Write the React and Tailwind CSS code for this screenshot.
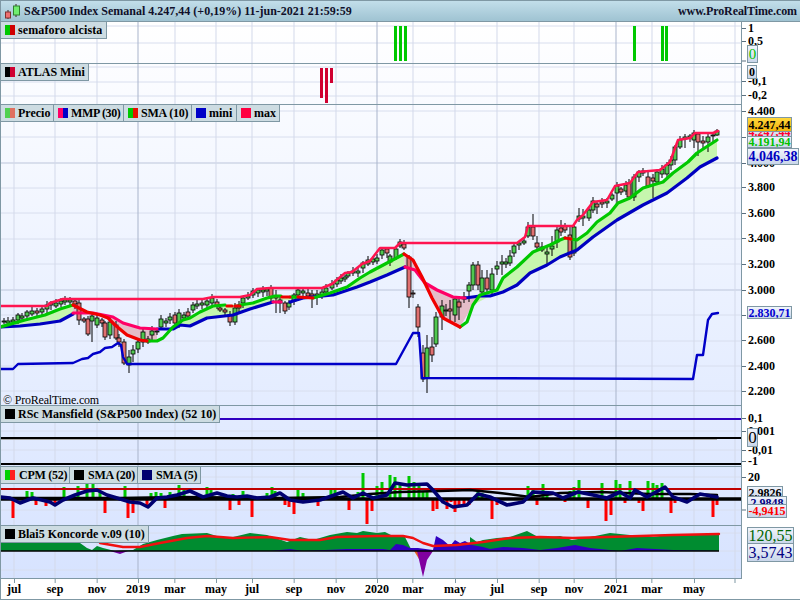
const greenTrend = [
  [[0,327],[25,320],[45,315],[60,309],[73,305]],
  [[147,341],[157,341],[163,338],[173,327],[183,320],[190,318],[200,312],[213,306],[225,305]],
  [[240,305],[253,303],[267,298],[275,296],[281,296]],
  [[290,297],[297,297]],
  [[313,298],[330,293],[347,287],[360,278],[370,272],[387,263],[404,254]],
  [[460,327],[467,322],[473,305],[480,295],[497,290],[503,278],[517,267],[533,252],[550,245],[560,240],[565,238]],
  [[571,239],[577,240],[587,233],[597,222],[610,213],[618,203],[630,198],[643,188],[663,182],[673,173],[688,162],[697,153],[717,140]],
];
const redTrend = [
  [[73,305],[87,312],[100,315],[108,318],[115,325],[127,335],[140,340],[147,341]],
  [[227,306],[232,306]],
  [[235,306],[240,306]],
  [[282,297],[290,297]],
  [[298,297],[313,298]],
  [[404,254],[413,260],[422,277],[432,298],[443,318],[460,327]],
  [[565,238],[571,239]],
];
const blueTrend = [
  [[0,327],[20,326],[40,324],[60,321],[73,314]],
  [[157,329],[173,329],[180,325],[190,326],[207,318],[233,315],[250,309],[273,302]],
  [[290,302],[303,298],[313,297],[333,295],[357,287],[370,282],[387,275],[405,267]],
  [[465,298],[480,296],[490,296],[503,292],[517,285],[530,273],[547,265],[560,257],[577,250],[593,237],[617,220],[643,205],[667,193],[687,178],[700,167],[717,158]],
];
const pinkTrend = [
  [[73,313],[93,313],[113,317],[123,323],[140,328],[157,329]],
  [[273,302],[281,302]],
  [[405,267],[415,270],[425,283],[437,290],[453,297],[465,298]],
];
const greenBands = [
  [[0,327],[25,320],[45,315],[60,309],[73,305],[73,314],[60,321],[40,324],[20,326]],
  [[157,341],[163,338],[173,327],[183,320],[190,318],[200,312],[213,306],[225,305],[253,303],[267,298],[275,296],[300,297],[313,298],[330,293],[347,287],[360,278],[370,272],[387,263],[404,254],[405,267],[387,275],[370,282],[357,287],[333,295],[313,297],[303,298],[273,302],[250,309],[233,315],[207,318],[190,326],[180,325],[173,329]],
  [[473,305],[480,295],[497,290],[503,278],[517,267],[533,252],[550,245],[565,238],[577,240],[587,233],[597,222],[610,213],[618,203],[630,198],[643,188],[663,182],[673,173],[688,162],[697,153],[717,140],[717,158],[700,167],[687,178],[667,193],[643,205],[617,220],[593,237],[577,250],[560,257],[547,265],[530,273],[517,285],[503,292],[490,296]],
];
const pinkBands = [
  [[73,305],[87,312],[100,315],[108,318],[115,325],[127,335],[140,340],[157,341],[157,329],[140,328],[123,323],[113,317],[93,313],[73,313]],
  [[404,254],[413,260],[422,277],[432,298],[443,318],[460,327],[473,305],[480,296],[465,298],[453,297],[437,290],[425,283],[415,270],[405,267]],
];
const maxLine = [[0,306],[47,306],[50,303],[63,299],[203,299],[213,297],[240,297],[250,295],[257,289],[270,288],[322,288],[332,284],[345,273],[352,272],[362,264],[370,261],[380,248],[395,248],[400,243],[517,243],[525,237],[528,226],[573,226],[577,220],[583,215],[593,202],[607,200],[615,186],[630,183],[638,172],[660,170],[670,162],[678,140],[690,138],[695,133],[713,133],[718,131]];
const miniLow = [[0,369],[13,369],[18,364],[73,363],[82,359],[88,358],[93,354],[100,352],[105,348],[112,347],[118,343],[121,345],[123,357],[127,364],[396,364],[413,333],[419,333],[422,378],[693,379],[697,355],[703,355],[708,320],[712,314],[718,313]];

// x, body top, body bottom, colour, optional wick high / low
const candles = [
  [4,321,322,"g"],[8,321,323,"g"],[13,320,322,"g"],[18,315,320,"g"],[22,316,318,"g"],[27,312,316,"g"],[32,311,314,"g"],[37,311,313,"r"],[42,309,312,"g"],[47,305,309,"g"],[51,303,305,"r"],[56,303,306,"g"],[61,301,304,"g"],[65,300,302,"g"],[70,300,302,"g"],[75,301,304,"r"],
  [79,303,320,"r"],[84,319,321,"r"],[88,319,334,"r"],[92,316,321,"g",314,342],[97,318,325,"g"],[102,320,323,"r"],[105,323,337,"r"],[110,322,335,"g"],[116,325,338,"r"],[119,338,342,"r"],[124,342,363,"r"],[129,357,365,"g",350,373],[133,350,354,"g",345,362],[138,342,349,"g"],[143,332,342,"g"],[148,339,342,"r"],[152,331,335,"g",326,342],[157,331,332,"g"],[161,319,327,"g"],[166,321,323,"g"],
  [170,317,320,"g"],[175,315,323,"r"],[179,313,323,"g"],[184,315,318,"g"],[188,312,316,"r"],[193,305,310,"g"],[197,304,306,"g"],[202,303,305,"g"],[207,301,305,"g"],[212,298,303,"g"],[217,302,306,"r"],[220,308,310,"r"],[225,310,312,"r"],[230,315,322,"r"],[235,308,322,"g",303,325],[239,305,308,"g"],[243,298,303,"g"],[248,296,298,"g"],[253,291,295,"g"],[258,290,293,"g"],[263,290,292,"g"],[267,289,291,"g"],[271,288,298,"r"],[276,296,298,"r",290,313],[280,300,303,"r",295,313],[285,303,311,"r"],[289,303,307,"g"],[294,295,301,"g"],[298,290,295,"g"],[303,291,293,"g"],[308,293,296,"r"],[312,294,296,"r",290,308],[317,294,296,"g",290,305],[322,292,295,"g"],[326,288,292,"g"],[332,284,288,"g"],[337,280,284,"g"],[341,278,281,"g"],[345,277,279,"g"],[348,273,276,"g"],[353,271,273,"g"],[358,271,273,"g"],[363,263,268,"g"],[368,260,264,"g"],[373,259,262,"g"],[377,258,261,"g"],
  [382,250,255,"g"],[387,249,253,"r"],[390,256,262,"g"],[396,249,258,"g"],[400,242,246,"g"],[404,244,248,"r"],[409,257,297,"r",255,308],[413,293,294,"r",290,298],[418,307,327,"r",304,337],[423,353,379,"r",345,382],[427,348,378,"g",335,393],[432,347,355,"r",337,362],[436,317,344,"g",312,347],[442,306,317,"g",300,330],[446,310,311,"g",304,316],[450,309,311,"r",300,322],[455,299,315,"g",296,322],[459,302,307,"r",298,320],[464,297,299,"g",292,303],[469,285,291,"g",282,302],[473,265,285,"g",262,290],[478,265,285,"r",261,290],[482,278,292,"g",270,296],[487,278,289,"r",270,294],[492,274,290,"g",268,294],[497,266,269,"g",261,275],[502,262,264,"g",255,275],[506,262,264,"g"],[510,256,263,"g",250,266],[514,246,253,"g"],[519,243,245,"g"],[524,241,243,"g"],[528,227,236,"g",222,238],[533,227,236,"r",214,240],[537,243,247,"r",236,250],[542,247,250,"r",242,252],[547,252,254,"g",245,264],[552,246,249,"g",236,256],[557,230,242,"g",226,248],[561,228,232,"r",220,236],
  [565,226,230,"r"],[570,235,257,"r",226,260],[574,227,253,"g",224,256],[579,216,219,"g",208,222],[583,216,218,"g",209,226],[589,210,218,"g"],[593,201,210,"g"],[597,204,207,"r",201,214],[602,202,204,"r"],[607,201,203,"g"],[612,195,199,"g"],[617,186,193,"g",182,203],[621,189,192,"r"],[626,185,191,"g"],[629,183,197,"r"],[634,177,197,"g"],[639,172,177,"g"],[643,171,173,"g",168,176],[648,177,186,"r",172,188],[653,178,181,"r",174,198],[657,172,182,"g"],[662,169,174,"g"],[667,165,174,"g"],[671,160,165,"g"],[675,147,160,"g"],[680,140,147,"g"],[685,137,139,"g",134,148],[690,136,138,"g"],[694,133,140,"g",130,148],[698,134,142,"r",132,156],[703,141,143,"r",136,148],[708,137,142,"g",133,152],[713,135,136,"g",132,142],[717,131,135,"g",129,136],
];

const monthTicks = [14,55,97,175,216,252,294,336,413,455,497,539,574,652,694,735];
const yearTicks = [138,377,616];
const xLabels = [["jul",14],["sep",55],["nov",97],["2019",138],["mar",175],["may",216],["jul",252],["sep",294],["nov",336],["2020",377],["mar",413],["may",455],["jul",497],["sep",539],["nov",574],["2021",616],["mar",652],["may",694],["",735]];

// x, top of bar
const cpmBars = [[13,518],[27,491],[32,492],[36,505],[46,506],[50,503],[55,506],[64,487],[78,486],[87,484],[93,484],[100,492],[105,513],[125,486],[128,518],[133,513],[147,505],[151,493],[156,492],[161,493],[165,508],[170,492],[179,485],[184,490],[207,487],[211,489],[230,510],[233,494],[239,505],[243,491],[252,517],[267,493],[272,487],[275,491],[285,505],[289,507],[294,514],[298,490],[303,493],[318,506],[327,496],[331,489],[335,489],[349,510],[358,492],[363,473],[367,524],[372,511],[377,486],[382,482],[390,475],[395,477],[400,483],[409,476],[414,482],[419,483],[423,492],[427,492],[433,511],[437,509],[447,509],[451,502],[455,512],[459,505],[464,505],[469,505],[478,490],[482,493],[492,519],[497,505],[528,486],[533,490],[537,505],[543,484],[547,494],[565,502],[570,491],[574,487],[579,480],[588,508],[602,483],[606,521],[611,515],[616,480],[620,484],[625,503],[630,481],[639,503],[643,511],[648,481],[653,483],[657,485],[662,483],[671,513],[675,503],[713,517],[717,505]];
const sma5 = [[0,497],[10,498],[20,503],[33,498],[50,502],[55,505],[63,500],[75,495],[87,491],[97,490],[107,495],[117,498],[130,502],[140,503],[148,507],[157,498],[167,497],[177,495],[190,491],[203,497],[217,493],[227,496],[237,497],[247,496],[257,498],[270,497],[280,493],[290,500],[303,502],[320,500],[343,492],[353,498],[363,493],[373,498],[387,495],[395,483],[407,485],[427,484],[433,490],[443,502],[453,507],[467,505],[478,494],[490,497],[507,505],[523,502],[533,492],[553,493],[563,498],[578,492],[593,495],[607,498],[620,492],[630,498],[635,490],[647,497],[665,487],[673,497],[687,502],[700,494],[717,497]];
const sma20 = [[0,498],[120,498],[180,497],[280,498],[340,497],[370,494],[400,492],[440,491],[470,490],[500,493],[530,497],[560,493],[600,492],[650,494],[690,494],[717,495]];

const koncordeGreen = [[0,551],[0,543],[80,543],[87,548],[92,550],[97,546],[103,548],[115,551],[133,550],[143,544],[157,540],[173,536],[182,534],[207,533],[220,537],[233,537],[250,533],[267,535],[287,542],[300,537],[313,540],[330,535],[347,532],[357,533],[363,531],[377,533],[385,532],[393,536],[405,537],[410,547],[412,551],[470,551],[470,537],[477,542],[483,540],[497,538],[510,537],[527,531],[540,538],[550,537],[560,536],[572,540],[590,537],[610,533],[630,535],[653,537],[673,534],[719,534],[719,551]];
const koncordeBlue = [[270,551],[290,549],[303,551],[347,549],[383,549],[390,550],[396,544],[403,545],[410,548],[418,548],[433,550],[436,536],[443,540],[450,546],[455,540],[460,543],[465,541],[472,545],[483,547],[490,549],[503,547],[523,548],[540,550],[557,548],[575,545],[590,548],[620,551],[637,548],[673,550],[719,551]];
const koncordeRed = [[100,543],[123,547],[140,547],[160,543],[187,538],[207,536],[233,538],[270,537],[290,540],[320,540],[337,537],[377,536],[403,536],[413,538],[423,543],[433,546],[457,545],[483,542],[510,538],[540,537],[573,538],[607,537],[640,536],[673,535],[719,534]];

const axisLabels = [["1",28],["0,5",41],["",61],["-0,1",81],["-0,2",95],["4.400",111],["4.200",137],["4.000",163],["3.800",187],["3.600",213],["3.400",238],["3.200",264],["3.000",290],["2.800",315],["2.600",340],["2.400",366],["2.200",391],["0,1",418],["0,001",431],["-0,01",450],["-1",461],["20",477],["",510]];

const pts = (list) => list.map((p) => p.join(",")).join(" ");

function Path({ points, color, width = 3.2 }) {
  return <polyline points={pts(points)} fill="none" stroke={color} strokeWidth={width} strokeLinejoin="round" strokeLinecap="round" />;
}

function Grid({ top, height, rows = [] }) {
  return (
    <>
      {rows.map((y) => (
        <line key={y} x1="0" x2="741" y1={y} y2={y} stroke={y === 163 || y === 290 ? "#bcc5da" : "#d8deee"} />
      ))}
      {monthTicks.map((x) => (
        <line key={x} x1={x} x2={x} y1={top} y2={top + height} stroke="#d3d9ea" />
      ))}
      {yearTicks.map((x) => (
        <line key={x} x1={x} x2={x} y1={top} y2={top + height} stroke="#a9b4cb" />
      ))}
    </>
  );
}

function Swatch({ a, b }) {
  return (
    <span className="flex h-2.5 w-2.5 shrink-0">
      <span className="flex-1" style={{ background: a }} />
      <span className="flex-1" style={{ background: b || a }} />
    </span>
  );
}

function Legend({ items }) {
  return (
    <div className="absolute top-0 left-0 flex">
      {items.map((it) => (
        <div key={it.label} className={`flex h-[17px] items-center gap-[3px] overflow-hidden border-r border-b border-[#7f98a4] bg-[#cddce2] ${it.cls || "pr-[3px] pl-[4px]"}`}>
          <Swatch a={it.a} b={it.b} />
          <span className="text-[12px] leading-none font-bold whitespace-nowrap text-black">{it.label}</span>
        </div>
      ))}
    </div>
  );
}

function Panel({ top, height, h, legend, children, rows, note }) {
  return (
    <section className={`relative shrink-0 border-b border-[#7f98a4] ${h}`}>
      <svg className="absolute inset-0 h-full w-full" viewBox={`1 ${top} 740 ${height - 1}`} preserveAspectRatio="none">
        <Grid top={top} height={height} rows={rows} />
        {children}
      </svg>
      <Legend items={legend} />
      {note}
    </section>
  );
}

function Candle({ c }) {
  const [x, top, bot, col, hi, lo] = c;
  const high = hi ?? top - 2 - (x % 3);
  const low = lo ?? bot + 2 + (x % 4);
  return (
    <g>
      <line x1={x} x2={x} y1={high} y2={low} stroke="#000" strokeWidth="1" />
      <rect x={x - 2} y={top} width="4" height={Math.max(bot - top, 1)} fill={col === "g" ? "#50c850" : "#e07070"} stroke="#000" strokeWidth="0.8" />
    </g>
  );
}

function Tag({ className, children }) {
  return (
    <div className={`absolute left-[5px] flex items-center justify-center overflow-hidden border border-[#7f98a4] bg-gradient-to-b from-[#f2f5fc] to-[#c9d6ea] leading-none whitespace-nowrap ${className}`}>
      {children}
    </div>
  );
}

function PriceAxis() {
  return (
    <aside className="relative w-[58px] shrink-0 bg-white text-[12px] font-bold text-black">
      {axisLabels.map(([label, y]) => (
        <div key={label + y} className="absolute left-0 flex -translate-y-1/2 items-center gap-[2px] leading-none" style={{ top: y - 22 }}>
          <span className="h-px w-[4px] bg-[#5a7080]" />
          <span>{label}</span>
        </div>
      ))}
      <Tag className="top-[23px] h-[18px] w-[11px] text-[15px] font-normal text-[#00c000]">0</Tag>
      <Tag className="top-[43px] h-[14px] w-[10px] text-[12px]">0</Tag>
      <Tag className="top-[104px] h-[12px] w-[45px] text-[#ff0030]">4.247,44</Tag>
      <Tag className="top-[114px] h-[12px] w-[45px] text-[#00c000]">4.191,94</Tag>
      <Tag className="top-[95px] h-[15px] w-[45px] from-[#ffd83a] to-[#f2b400]">4.247,44</Tag>
      <Tag className="top-[126px] h-[17px] w-[52px] text-[14px] text-[#0000c0]">4.046,38</Tag>
      <Tag className="top-[284px] h-[13px] w-[45px] text-[#0000d0]">2.830,71</Tag>
      <Tag className="top-[406px] h-[19px] w-[11px] text-[17px] font-normal">0</Tag>
      <Tag className="top-[464px] h-[13px] w-[36px]">2,9826</Tag>
      <Tag className="top-[474px] h-[13px] w-[40px] text-[#000080]">2,9848</Tag>
      <Tag className="top-[482px] h-[14px] w-[40px] text-[#ff0000]">-4,9415</Tag>
      <Tag className="top-[505px] h-[18px] w-[47px] text-[16px] font-normal text-[#006400]">120,55</Tag>
      <Tag className="top-[521px] h-[19px] w-[47px] text-[16px] font-normal text-[#000080]">3,5743</Tag>
    </aside>
  );
}

export default function App() {
  return (
    <div className="flex h-[600px] w-[800px] flex-col overflow-hidden border-b border-l border-[#7f98a4] bg-white font-['Liberation_Serif',serif]">
      <header className="flex h-[22px] shrink-0 items-center justify-between border-t border-b border-[#7f98a4] bg-gradient-to-b from-[#c2deea] to-[#9fc3d2] pr-[3px] pl-[2px]">
        <div className="flex items-center gap-[4px]">
          <svg width="17" height="15" viewBox="0 0 17 15">
            <path d="M5 6v9M13 0v13" stroke="#3a2020" strokeWidth="1" />
            <rect x="2.5" y="8" width="5" height="6" fill="#ee7070" stroke="#803030" />
            <rect x="10.5" y="2" width="6" height="9" fill="#70ee70" stroke="#308030" />
          </svg>
          <span className="text-[12px] leading-none font-bold whitespace-nowrap text-[#10102a]">S&amp;P500 Index Semanal 4.247,44 (+0,19%) 11-jun-2021 21:59:59</span>
        </div>
        <span className="text-[12px] leading-none font-bold tracking-[-0.1px] text-[#10102a]">www.ProRealTime.com</span>
      </header>

      <div className="flex min-h-0 flex-1 flex-col">
        <div className="flex shrink-0">
          <main className="flex w-[741px] shrink-0 flex-col border-r border-[#7f98a4] bg-gradient-to-b from-white to-[#d7e3ff]">
            <Panel top={22} height={42} h="h-[42px]" rows={[26, 43]} legend={[{ label: "semaforo alcista", a: "#00c800", b: "#d00000", cls: "w-[106px] pl-[4px] tracking-[0.1px]" }]}>
              {[394, 399, 404, 633, 661, 665].map((x) => (
                <rect key={x} x={x} y="26" width="3" height="35" fill="#00c800" />
              ))}
            </Panel>
            <Panel top={64} height={41} h="h-[41px]" rows={[67, 82, 96]} legend={[{ label: "ATLAS Mini", a: "#000", b: "#d00030" }]}>
              <rect x="320" y="68" width="3" height="30" fill="#d00030" />
              <rect x="325" y="68" width="3" height="35" fill="#d00030" />
              <rect x="330" y="68" width="3" height="15" fill="#d00030" />
            </Panel>
            <Panel
              top={105}
              height={301}
              h="h-[301px]"
              rows={[111, 137, 163, 188, 213, 239, 264, 290, 315, 341, 366, 391]}
              legend={[
                { label: "Precio", a: "#50d050", b: "#e07060", cls: "w-[53px] pl-[4px]" },
                { label: "MMP (30)", a: "#ff0066", b: "#0000c8", cls: "w-[70px] pl-[4px] tracking-[-0.35px]" },
                { label: "SMA (10)", a: "#00c800", b: "#e81000", cls: "w-[68px] pl-[4px] tracking-[-0.2px]" },
                { label: "mini", a: "#0000c8", cls: "w-[45px] pl-[4px]" },
                { label: "max", a: "#ff0040", cls: "w-[43px] pl-[4px]" },
              ]}
              note={<span className="absolute top-[289px] left-[2px] text-[12px] leading-none tracking-[-0.2px] text-black">© ProRealTime.com</span>}
            >
              {greenBands.map((b, i) => <polygon key={i} points={pts(b)} fill="#c6f6ae" />)}
              {pinkBands.map((b, i) => <polygon key={i} points={pts(b)} fill="#e4bcc8" />)}
              {candles.map((c) => <Candle key={c[0]} c={c} />)}
              <Path points={miniLow} color="#0000c8" width={2.4} />
              <Path points={maxLine} color="#ff1450" width={2.5} />
              {blueTrend.map((p, i) => <Path key={i} points={p} color="#0000c0" />)}
              {pinkTrend.map((p, i) => <Path key={i} points={p} color="#ff0066" />)}
              {greenTrend.map((p, i) => <Path key={i} points={p} color="#00c800" />)}
              {redTrend.map((p, i) => <Path key={i} points={p} color="#f00000" />)}
            </Panel>
            <Panel top={406} height={61} h="h-[61px]" rows={[419, 431, 450]} legend={[{ label: "RSc Mansfield (S&P500 Index) (52 10)", a: "#000" }]}>
              <line x1="0" x2="741" y1="419" y2="419" stroke="#3000c0" strokeWidth="2" />
              <line x1="0" x2="717" y1="439" y2="439" stroke="#aaa" strokeWidth="2" />
              <line x1="0" x2="741" y1="438" y2="438" stroke="#000" strokeWidth="2" />
              <line x1="0" x2="741" y1="464" y2="464" stroke="#000" strokeWidth="2" />
            </Panel>
            <Panel
              top={467}
              height={59}
              h="h-[59px]"
              rows={[477, 510]}
              legend={[
                { label: "CPM (52)", a: "#00d000", b: "#ff2020", cls: "w-[69px] gap-[4px] pl-[4px] tracking-[-0.25px]" },
                { label: "SMA (20)", a: "#000", cls: "w-[68px] gap-[4px] pl-[4px] tracking-[-0.25px]" },
                { label: "SMA (5)", a: "#000070", cls: "w-[63px] gap-[4px] pl-[4px] tracking-[-0.25px]" },
              ]}
            >
              {cpmBars.map(([x, y]) => (
                y < 499
                  ? <rect key={x} x={x - 1.5} y={y} width="3" height={499 - y} fill="#00c800" />
                  : <rect key={x} x={x - 1.5} y="499" width="3" height={y - 499} fill="#ff0000" />
              ))}
              <line x1="0" x2="741" y1="489" y2="489" stroke="#c00000" strokeWidth="2" />
              <Path points={sma20} color="#000" width={2.5} />
              <line x1="0" x2="741" y1="499" y2="499" stroke="#000" strokeWidth="3.6" />
              <rect x="710" y="494" width="8" height="6" fill="#000" />
              <Path points={sma5} color="#000070" width={3.6} />
            </Panel>
            <Panel top={526} height={53} h="h-[53px]" rows={[533, 551, 570]} legend={[{ label: "Blai5 Koncorde v.09 (10)", a: "#000" }]}>
              <polygon points={pts(koncordeGreen)} fill="#008c30" />
              <polygon points={pts(koncordeBlue)} fill="#3000c0" />
              <polygon points="110,551 120,554 128,551" fill="#7000a0" />
              <polygon points="414,551 419,559 421,551" fill="#e86020" />
              <polygon points="417,551 423,577 427,560 433,551" fill="#8000a0" />
              <line x1="0" x2="719" y1="551" y2="551" stroke="#000" strokeWidth="1.5" />
              <Path points={koncordeRed} color="#f01010" width={2.4} />
            </Panel>
          </main>
          <PriceAxis />
        </div>
        <footer className="relative min-h-0 flex-1 bg-white">
          {xLabels.map(([label, x]) => (
            <div key={label + x} className="absolute top-0 flex -translate-x-1/2 flex-col items-center" style={{ left: x - 1 }}>
              <span className="h-[4px] w-px bg-[#7f98a4]" />
              <span className="text-[12px] leading-none font-bold text-black">{label}</span>
            </div>
          ))}
        </footer>
      </div>
    </div>
  );
}
